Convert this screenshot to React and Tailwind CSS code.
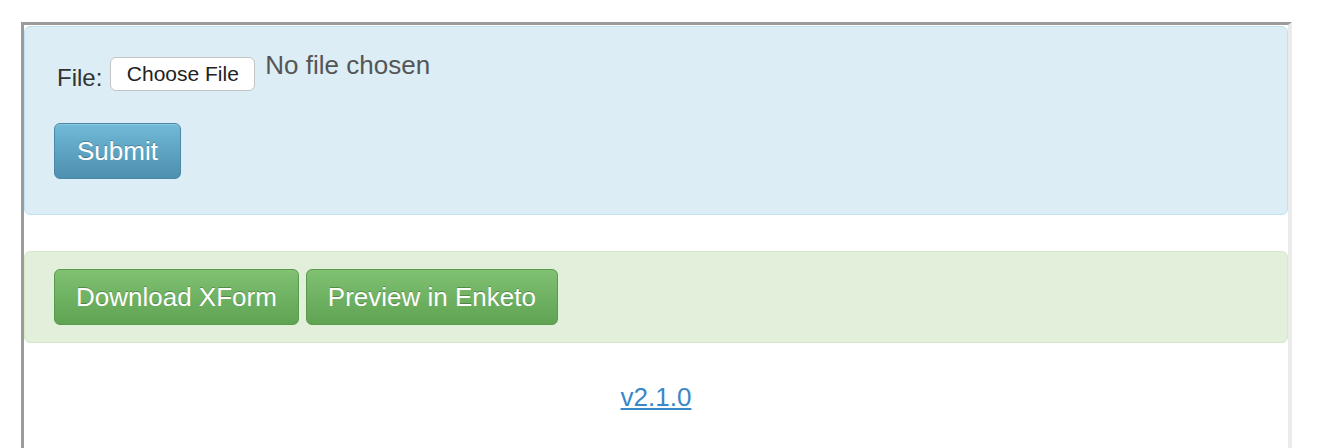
import React from "react";

export default function App() {
  return (
    <div className="min-h-screen bg-white font-['Liberation_Sans',Arial,sans-serif] pt-[22px] pl-[21px]">
      <div className="w-[1271px] h-[440px] border-t-[3px] border-l-[3px] border-r-[4px] border-[#9b9b9b] border-r-[#ebebeb] pt-px">
        {/* upload form */}
        <div className="h-[189px] rounded-[6px] border border-[#bfe3ee] bg-[#dcedf5] pl-[29px] pt-[30px]">
          <div className="flex items-start text-[#333]">
            <span className="ml-[3px] mt-[6px] mr-[8px] text-[24px] leading-[30px] text-[#333]">File:</span>
            <button className="h-[34px] w-[145px] rounded-[6px] border border-[#c4c4c4] bg-white text-[21px] leading-[32px] text-[#222]">
              Choose File
            </button>
            <span className="ml-[10px] -mt-[7px] text-[26px] leading-[30px] text-[#555]">
              No file chosen
            </span>
          </div>
          <button className="mt-[30px] h-[56px] px-[22px] rounded-[6px] border border-[#4a88a6] bg-gradient-to-b from-[#71bad8] to-[#4d8fae] text-[26px] text-white [text-shadow:0_-1px_0_rgba(0,0,0,0.25)] shadow-[inset_0_1px_0_rgba(255,255,255,0.2)]">
            Submit
          </button>
        </div>

        {/* actions */}
        <div className="mt-[36px] h-[92px] rounded-[6px] border border-[#d5e8c8] bg-[#e2efdb] pl-[29px] pt-[17px] flex gap-[7px]">
          <button className="h-[56px] px-[21px] rounded-[6px] border border-[#5a9a4f] bg-gradient-to-b from-[#80c172] to-[#5fa353] text-[26px] text-white [text-shadow:0_-1px_0_rgba(0,0,0,0.25)]">
            Download XForm
          </button>
          <button className="h-[56px] px-[21px] rounded-[6px] border border-[#5a9a4f] bg-gradient-to-b from-[#80c172] to-[#5fa353] text-[26px] text-white [text-shadow:0_-1px_0_rgba(0,0,0,0.25)]">
            Preview in Enketo
          </button>
        </div>

        <div className="mt-[39px] text-center">
          <a href="#" className="text-[26px] leading-[30px] text-[#3a87c9] underline">
            v2.1.0
          </a>
        </div>
      </div>
    </div>
  );
}
